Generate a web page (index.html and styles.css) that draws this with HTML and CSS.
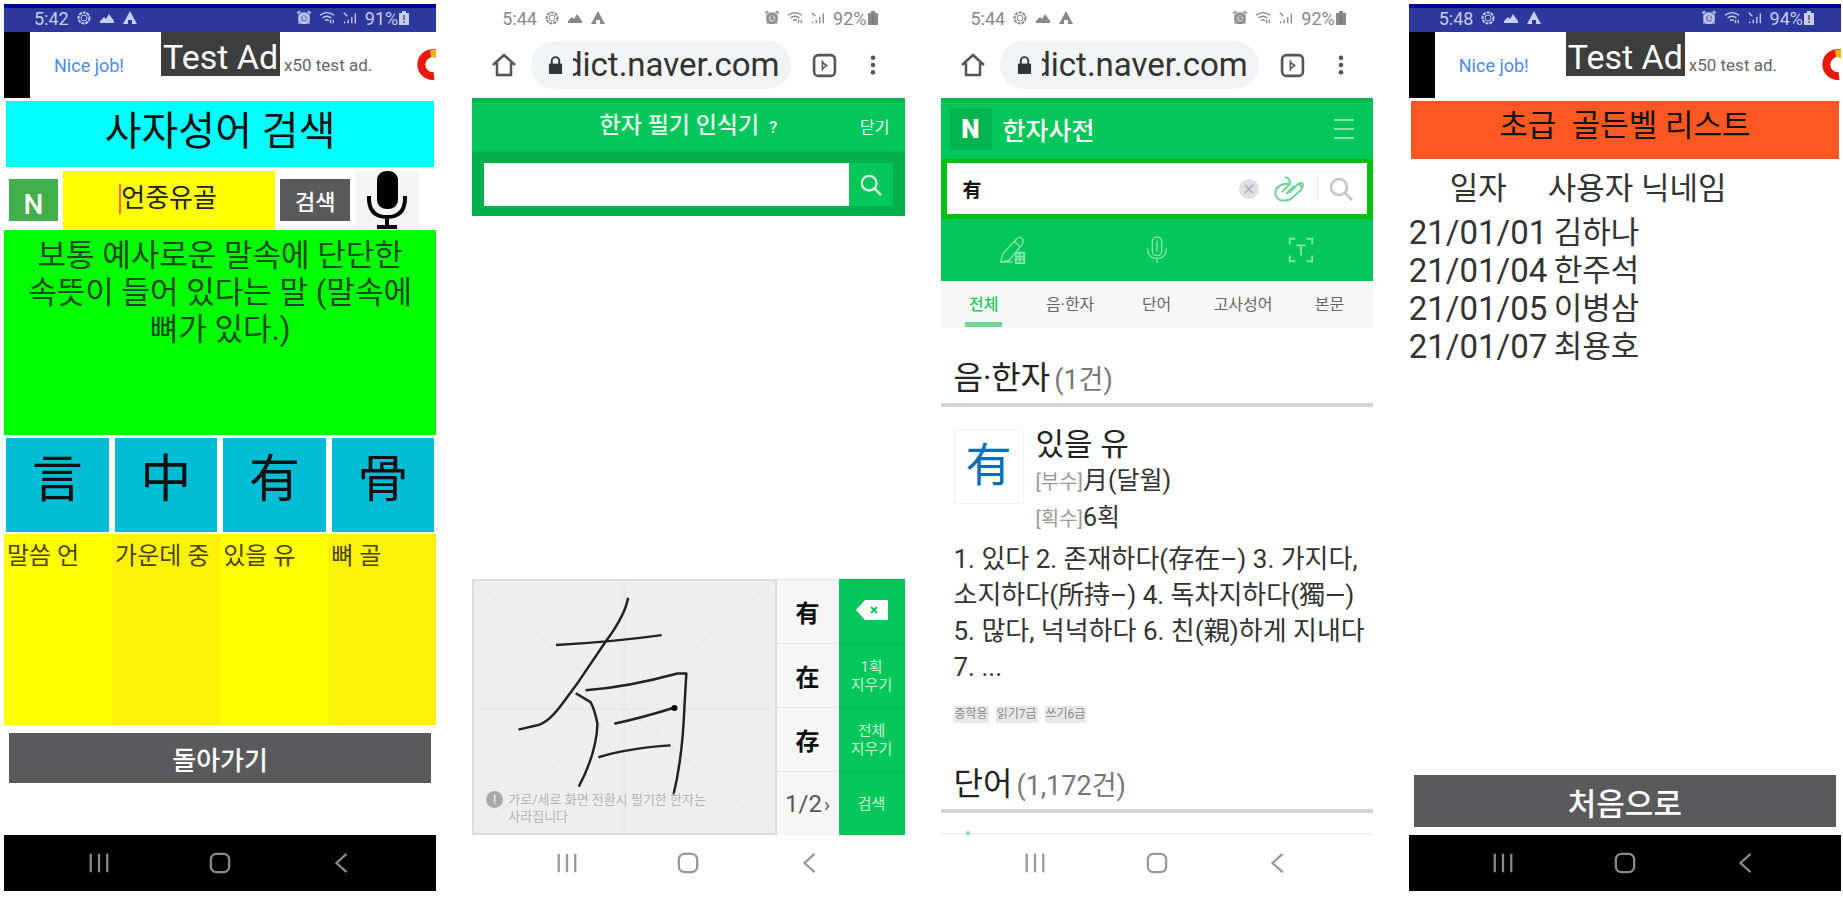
FILE: index.html
```html
<!DOCTYPE html>
<html lang="ko">
<head>
    <meta charset="UTF-8">
    <meta name="viewport" content="width=device-width, initial-scale=1.0">
    <title>사자성어 검색</title>
    <link rel="stylesheet" href="styles.css">
</head>
<body>
    <!-- shared icons -->
    <svg class="sprite" aria-hidden="true">
        <symbol id="i-gear" viewBox="0 0 16 16"><circle cx="8" cy="8" r="5.5" fill="none" stroke="currentColor" stroke-width="2" stroke-dasharray="3 1"/><circle cx="8" cy="8" r="3" fill="none" stroke="currentColor"/></symbol>
        <symbol id="i-photo" viewBox="0 0 16 16"><path d="M1 13V11L5 7l2 2 3-5 5 7v2z" fill="currentColor"/></symbol>
        <symbol id="i-warn" viewBox="0 0 16 16"><path d="M8 1l7 13H10V10H6v4H1z" fill="currentColor"/></symbol>
        <symbol id="i-alarm" viewBox="0 0 16 16"><path d="M2 2h12v12H2z" fill="currentColor" opacity=".55"/><circle cx="8" cy="8.500" r="4.500" fill="none" stroke="currentColor" stroke-width="2"/><path d="M1 3l3-2M15 3l-3-2M8 6v3h2" fill="none" stroke="currentColor" stroke-width="1.500"/></symbol>
        <symbol id="i-wifi" viewBox="0 0 18 16"><path d="M1 5q8-6 16 0M4 8q5-4 10 0M7 11q2-2 4 0M13 10v4M16 14v-4" fill="none" stroke="currentColor" stroke-width="1.500"/></symbol>
        <symbol id="i-signal" viewBox="0 0 18 16"><path d="M2 2l4 4M3 14v-2M7 14V10M11 14V7M15 14V3" fill="none" stroke="currentColor" stroke-width="1.500"/></symbol>
        <symbol id="i-battery" viewBox="0 0 12 16"><path d="M4 1h4v2h3v12H1V3h3z" fill="currentColor"/><path d="M6 5v5M5 12h2" stroke="#777" stroke-width="2"/></symbol>
        <symbol id="i-recent" viewBox="0 0 24 24"><path d="M3 2v20M12 2v20M21 2v20" stroke="currentColor" stroke-width="2.500"/></symbol>
        <symbol id="i-home" viewBox="0 0 24 24"><rect x="2" y="2" width="20" height="20" rx="6" fill="none" stroke="currentColor" stroke-width="2.500"/></symbol>
        <symbol id="i-back" viewBox="0 0 24 24"><path d="M17 2L6 12l11 10" fill="none" stroke="currentColor" stroke-width="2.500"/></symbol>
        <symbol id="i-house" viewBox="0 0 24 24"><path d="M1 12L12 2l11 10M5 10v12h14V10" fill="none" stroke="currentColor" stroke-width="2.500"/></symbol>
        <symbol id="i-lock" viewBox="0 0 16 20"><path d="M1 8h14v11H1z" fill="currentColor"/><path d="M4 9V5a4 4 0 0 1 8 0v4" fill="none" stroke="currentColor" stroke-width="2"/></symbol>
        <symbol id="i-tabs" viewBox="0 0 24 24"><rect x="2" y="2" width="20" height="20" rx="4" fill="none" stroke="currentColor" stroke-width="2.500"/><path d="M10 7v10M10 9l4 3-4 3" fill="none" stroke="currentColor" stroke-width="1.500"/></symbol>
        <symbol id="i-dots" viewBox="0 0 8 24"><circle cx="4" cy="4" r="2.500" fill="currentColor"/><circle cx="4" cy="12" r="2.500" fill="currentColor"/><circle cx="4" cy="20" r="2.500" fill="currentColor"/></symbol>
        <symbol id="i-search" viewBox="0 0 24 24"><circle cx="10" cy="10" r="8" fill="none" stroke="currentColor" stroke-width="2.500"/><path d="M16 16l7 7" stroke="currentColor" stroke-width="2.500"/></symbol>
        <symbol id="i-admob" viewBox="0 0 22 32"><path d="M22 4.500A11.500 11.500 0 1 0 20 27" fill="none" stroke="#e6190f" stroke-width="8"/><path d="M16 1.500q3-1.500 6-.5v8l-5-1z" fill="#fbb316"/></symbol>
    </svg>

    <main class="phones">
        <!-- idiom search -->
        <section class="phone">
            <header class="status status-blue">
                <span>5:42</span>
                <svg><use href="#i-gear"/></svg>
                <svg><use href="#i-photo"/></svg>
                <svg><use href="#i-warn"/></svg>
                <svg class="push"><use href="#i-alarm"/></svg>
                <svg><use href="#i-wifi"/></svg>
                <svg><use href="#i-signal"/></svg>
                <span class="charge">91%<svg><use href="#i-battery"/></svg></span>
            </header>
            <div class="ad">
                <a class="ad-link" href="#">Nice job!</a>
                <span class="ad-text">x50 test ad.</span>
                <svg class="ad-logo"><use href="#i-admob"/></svg>
                <span class="ad-badge">Test Ad</span>
            </div>
            <h1 class="title title-cyan">사자성어 검색</h1>
            <form class="idiom-form">
                <button type="button" class="btn-n">N</button>
                <div class="idiom-field">
                    <input type="text" value="언중유골" aria-label="사자성어">
                    <span class="caret"></span>
                </div>
                <button type="button" class="btn btn-search">검색</button>
                <button type="button" class="btn-mic" aria-label="음성 입력">
                    <svg viewBox="0 0 40 58"><rect x="10" y="0" width="21" height="38" rx="9"/><path d="M2 25v4q1 17 18 17t18-17v-4M20 46v9M10 56h20" fill="none" stroke="#000" stroke-width="4"/></svg>
                </button>
            </form>
            <p class="meaning">보통 예사로운 말속에 단단한 속뜻이 들어 있다는 말 (말속에 뼈가 있다.)</p>
            <div class="hanja-row">
                <button type="button">言</button>
                <button type="button">中</button>
                <button type="button">有</button>
                <button type="button">骨</button>
            </div>
            <div class="sound-row">
                <span>말씀 언</span>
                <span>가운데 중</span>
                <span>있을 유</span>
                <span>뼈 골</span>
            </div>
            <button type="button" class="btn btn-back">돌아가기</button>
            <nav class="navbar navbar-dark">
                <button type="button" aria-label="최근 앱"><svg><use href="#i-recent"/></svg></button>
                <button type="button" aria-label="홈"><svg><use href="#i-home"/></svg></button>
                <button type="button" aria-label="뒤로"><svg><use href="#i-back"/></svg></button>
            </nav>
        </section>

        <!-- handwriting input -->
        <section class="phone">
            <header class="status">
                <span>5:44</span>
                <svg><use href="#i-gear"/></svg>
                <svg><use href="#i-photo"/></svg>
                <svg><use href="#i-warn"/></svg>
                <svg class="push"><use href="#i-alarm"/></svg>
                <svg><use href="#i-wifi"/></svg>
                <svg><use href="#i-signal"/></svg>
                <span class="charge">92%<svg><use href="#i-battery"/></svg></span>
            </header>
            <div class="browser">
                <svg class="house"><use href="#i-house"/></svg>
                <div class="address">
                    <svg><use href="#i-lock"/></svg>
                    <span class="url">dict.naver.com</span>
                </div>
                <svg class="tabs-icon"><use href="#i-tabs"/></svg>
                <svg class="dots"><use href="#i-dots"/></svg>
            </div>
            <div class="write-head">
                <h2>한자 필기 인식기 <small>?</small></h2>
                <button type="button">닫기</button>
            </div>
            <form class="write-search">
                <input type="text" aria-label="검색어">
                <button type="button" aria-label="검색"><svg><use href="#i-search"/></svg></button>
            </form>
            <div class="writer">
                <div class="pad">
                    <svg class="pad-drawing" viewBox="0 0 304 256" preserveAspectRatio="none">
                        <path class="guide" d="M0 0l304 256M304 0L0 256M152 0v256M0 130h304"/>
                        <path class="ink" d="M83 65Q140 62 190 55M156 17Q153 35 133 62L106 102L90 124Q76 143 66 146L45 151M103 114L118 123Q122 130 125 145Q124 175 106 209M113 111Q155 108 206 94L215 94L213 129Q211 180 202 217M142 145Q170 139 205 128M126 179Q155 170 199 167"/>
                        <circle cx="203" cy="129" r="3"/>
                    </svg>
                    <p class="hint"><span class="hint-icon">!</span>가로/세로 화면 전환시 필기한 한자는 사라집니다</p>
                </div>
                <div class="candidates">
                    <button type="button">有</button>
                    <button type="button">在</button>
                    <button type="button">存</button>
                    <button type="button" class="pager">1/2<small>›</small></button>
                </div>
                <div class="actions">
                    <button type="button" aria-label="지우기"><svg viewBox="0 0 32 22"><path d="M0 11L9 1h23v20H9z" fill="#fff"/><path d="M15 8l6 6M21 8l-6 6" stroke="#03c75a" stroke-width="2"/></svg></button>
                    <button type="button">1획<br>지우기</button>
                    <button type="button">전체<br>지우기</button>
                    <button type="button">검색</button>
                </div>
            </div>
            <nav class="navbar">
                <button type="button" aria-label="최근 앱"><svg><use href="#i-recent"/></svg></button>
                <button type="button" aria-label="홈"><svg><use href="#i-home"/></svg></button>
                <button type="button" aria-label="뒤로"><svg><use href="#i-back"/></svg></button>
            </nav>
        </section>

        <!-- dictionary result -->
        <section class="phone">
            <header class="status">
                <span>5:44</span>
                <svg><use href="#i-gear"/></svg>
                <svg><use href="#i-photo"/></svg>
                <svg><use href="#i-warn"/></svg>
                <svg class="push"><use href="#i-alarm"/></svg>
                <svg><use href="#i-wifi"/></svg>
                <svg><use href="#i-signal"/></svg>
                <span class="charge">92%<svg><use href="#i-battery"/></svg></span>
            </header>
            <div class="browser">
                <svg class="house"><use href="#i-house"/></svg>
                <div class="address">
                    <svg><use href="#i-lock"/></svg>
                    <span class="url">dict.naver.com</span>
                </div>
                <svg class="tabs-icon"><use href="#i-tabs"/></svg>
                <svg class="dots"><use href="#i-dots"/></svg>
            </div>
            <div class="dict-head">
                <a class="dict-logo" href="#">N</a>
                <h2>한자사전</h2>
                <button type="button" aria-label="메뉴"><svg viewBox="0 0 20 22"><path d="M0 2h20M0 11h20M0 20h20" stroke="currentColor" stroke-width="2"/></svg></button>
            </div>
            <form class="dict-search">
                <input type="text" value="有" aria-label="한자 검색">
                <svg class="clear" viewBox="0 0 20 20"><circle cx="10" cy="10" r="10" fill="#dde0e5"/><path d="M6 6l8 8M14 6l-8 8" stroke="#a8adb5" stroke-width="1.500"/></svg>
                <svg class="hand" viewBox="0 0 30 26" fill="none" stroke="#6fd39a" stroke-width="2"><path d="M11 1q6 2 5 7M16 8Q5 7 2 14q-2 7 4 10 8 2 13-3l8-7q3-4 1-7l-4 1-9 9M16 8l-8 8M20 10l-8 8M25 8l3 4"/></svg>
                <span class="divider"></span>
                <button type="button" aria-label="검색"><svg><use href="#i-search"/></svg></button>
            </form>
            <div class="dict-tools">
                <button type="button" aria-label="필기"><svg viewBox="0 0 30 30" fill="none" stroke="currentColor" stroke-width="1.500"><path d="M2 28l2-9L19 3q4-3 6 0t-1 7L11 26l-9 2zM17 6l6 6M2 28h13"/><path d="M18 18h9v11h-9zM18 22h9M18 25h9M22 18v11" stroke-width="2"/></svg></button>
                <button type="button" aria-label="음성"><svg viewBox="0 0 30 30" fill="none" stroke="currentColor" stroke-width="1.500"><rect x="10" y="1" width="10" height="20" rx="5"/><path d="M5 13q0 11 10 11t10-11M15 24v5M15 5v12"/></svg></button>
                <button type="button" aria-label="문자 인식"><svg viewBox="0 0 30 30" fill="none" stroke="currentColor" stroke-width="2"><path d="M3 9V3h6M21 3h6v6M27 21v6h-6M9 27H3v-6M10 10h10M15 10v11"/></svg></button>
            </div>
            <div class="dict-tabs">
                <a class="active" href="#">전체</a>
                <a href="#">음·한자</a>
                <a href="#">단어</a>
                <a href="#">고사성어</a>
                <a href="#">본문</a>
            </div>
            <h3 class="group">음·한자<small>(1건)</small></h3>
            <article class="entry">
                <div class="entry-top">
                    <div class="entry-char">有</div>
                    <div>
                        <h4>있을 유</h4>
                        <p class="entry-info"><small>[부수]</small>月(달월)</p>
                        <p class="entry-info"><small>[획수]</small>6획</p>
                    </div>
                </div>
                <p class="entry-text">1. 있다 2. 존재하다(存在–) 3. 가지다, 소지하다(所持–) 4. 독차지하다(獨—) 5. 많다, 넉넉하다 6. 친(親)하게 지내다 7. ...</p>
                <div class="tags">
                    <span>중학용</span>
                    <span>읽기7급</span>
                    <span>쓰기6급</span>
                </div>
            </article>
            <h3 class="group">단어<small>(1,172건)</small></h3>
            <div class="peek"></div>
            <nav class="navbar">
                <button type="button" aria-label="최근 앱"><svg><use href="#i-recent"/></svg></button>
                <button type="button" aria-label="홈"><svg><use href="#i-home"/></svg></button>
                <button type="button" aria-label="뒤로"><svg><use href="#i-back"/></svg></button>
            </nav>
        </section>

        <!-- golden bell list -->
        <section class="phone">
            <header class="status status-blue">
                <span>5:48</span>
                <svg><use href="#i-gear"/></svg>
                <svg><use href="#i-photo"/></svg>
                <svg><use href="#i-warn"/></svg>
                <svg class="push"><use href="#i-alarm"/></svg>
                <svg><use href="#i-wifi"/></svg>
                <svg><use href="#i-signal"/></svg>
                <span class="charge">94%<svg><use href="#i-battery"/></svg></span>
            </header>
            <div class="ad">
                <a class="ad-link" href="#">Nice job!</a>
                <span class="ad-text">x50 test ad.</span>
                <svg class="ad-logo"><use href="#i-admob"/></svg>
                <span class="ad-badge">Test Ad</span>
            </div>
            <h1 class="title title-orange">초급&nbsp; 골든벨 리스트</h1>
            <table class="bell">
                <thead>
                    <tr><th class="date">일자</th><th>사용자 닉네임</th></tr>
                </thead>
                <tbody>
                    <tr><td>21/01/01</td><td>김하나</td></tr>
                    <tr><td>21/01/04</td><td>한주석</td></tr>
                    <tr><td>21/01/05</td><td>이병삼</td></tr>
                    <tr><td>21/01/07</td><td>최용호</td></tr>
                </tbody>
            </table>
            <button type="button" class="btn btn-first">처음으로</button>
            <nav class="navbar navbar-dark">
                <button type="button" aria-label="최근 앱"><svg><use href="#i-recent"/></svg></button>
                <button type="button" aria-label="홈"><svg><use href="#i-home"/></svg></button>
                <button type="button" aria-label="뒤로"><svg><use href="#i-back"/></svg></button>
            </nav>
        </section>
    </main>
</body>
</html>
```
FILE: styles.css
```css
* {
    box-sizing: border-box;
}

body {
    margin: 0;
    background: #fff;
    color: #222;
    font-family: Roboto, "Noto Sans CJK KR", sans-serif;
}

h1, h2, h3, h4, p {
    margin: 0;
    font-weight: 400;
}

button, input {
    font-family: inherit;
    padding: 0;
    border: 0;
    border-radius: 0;
    background: none;
    color: inherit;
}

button {
    cursor: pointer;
}

a {
    color: inherit;
    text-decoration: none;
}

.sprite {
    display: none;
}

.phones {
    display: grid;
    grid-template-columns: repeat(4, 1fr);
    gap: 36px;
    padding: 4px 2px 10px 4px;
}

.phone {
    display: flex;
    flex-direction: column;
    min-width: 0;
    min-height: calc(100vh - 14px);
}

/* status bar */
.status {
    display: flex;
    align-items: center;
    gap: 7px;
    height: 28px;
    padding: 0 26px 0 30px;
    color: #888;
    font-size: 18px;
}

.status svg {
    width: 16px;
    height: 16px;
}

.status .push {
    margin-left: auto;
}

.status-blue {
    background: linear-gradient(#0202a0 4px, #2c389c 4px);
    color: #c9cdf0;
}

.charge {
    display: flex;
    align-items: center;
}

.charge svg {
    width: 12px;
}

/* ad banner */
.ad {
    position: relative;
    display: flex;
    align-items: center;
    height: 66px;
    border-left: 26px solid #000;
}

.ad-link {
    margin-left: 24px;
    color: #4a8af4;
    font-size: 18px;
}

.ad-text {
    margin-left: auto;
    color: #666;
    font-size: 17px;
}

.ad-logo {
    width: 22px;
    height: 32px;
    margin-left: 42px;
}

.ad-badge {
    position: absolute;
    top: 0;
    left: 131px;
    height: 44px;
    padding: 0 2px;
    background: #3d3d3d;
    color: #fff;
    font-size: 34px;
    line-height: 50px;
}

.title {
    margin: 3px 2px 0;
    color: #111;
    text-align: center;
}

.title-cyan {
    height: 66px;
    background: #00ffff;
    font-size: 40px;
    line-height: 62px;
}

.title-orange {
    height: 58px;
    background: #ff5722;
    font-size: 31px;
    line-height: 50px;
}

.btn {
    background: #5a5a5c;
    color: #fff;
    font-weight: 500;
}

/* idiom search */
.idiom-form {
    display: flex;
    align-items: center;
    gap: 5px;
    height: 58px;
    margin: 4px 17px 1px 5px;
}

.btn-n {
    width: 49px;
    height: 42px;
    padding-top: 8px;
    background: #43ae4c;
    color: #fff;
    font-size: 28px;
    font-weight: 500;
}

.idiom-field {
    position: relative;
    flex: 1;
    height: 58px;
}

.idiom-field input {
    width: 100%;
    height: 100%;
    padding-bottom: 9px;
    background: #ffff00;
    font-size: 26px;
    text-align: center;
}

.caret {
    position: absolute;
    top: 13px;
    left: calc(50% - 50px);
    width: 2px;
    height: 30px;
    background: #ff6a4d;
}

.btn-search {
    width: 70px;
    height: 42px;
    font-size: 22px;
}

.btn-mic {
    width: 64px;
    height: 58px;
    background: #f5f5f5;
}

.btn-mic svg {
    display: block;
    width: 40px;
    height: 58px;
    margin: 0 auto;
}

.meaning {
    min-height: 205px;
    padding-top: 7px;
    background: #00ff00;
    color: #1a4a1a;
    font-size: 31px;
    line-height: 37px;
    text-align: center;
    word-break: keep-all;
}

.hanja-row {
    display: grid;
    grid-template-columns: repeat(4, 1fr);
    gap: 6px;
    margin: 3px 2px 2px;
}

.hanja-row button {
    height: 94px;
    padding-bottom: 10px;
    background: #00bcd4;
    color: #111;
    font-size: 51px;
    line-height: 80px;
}

.sound-row {
    display: grid;
    grid-template-columns: repeat(4, 1fr);
    min-height: 191px;
    background: #ffff00;
}

.sound-row span {
    padding: 6px 3px;
    color: #4a4410;
    font-size: 24px;
    line-height: 32px;
    white-space: nowrap;
}

.sound-row span:nth-child(even) {
    background: #fdf207;
}

.btn-back {
    height: 50px;
    margin: 8px 5px;
    font-size: 26px;
}

/* android navigation */
.navbar {
    display: grid;
    grid-template-columns: repeat(3, 1fr);
    height: 56px;
    margin-top: auto;
    padding: 0 34px;
    color: #999;
}

.navbar svg {
    display: block;
    width: 24px;
    height: 22px;
    margin: 0 auto;
}

.navbar-dark {
    background: #000;
    color: #8a8a8a;
}

/* browser toolbar */
.browser {
    display: flex;
    align-items: center;
    height: 66px;
    padding: 0 28px 0 20px;
    color: #555;
}

.house {
    width: 24px;
    height: 24px;
}

.address {
    display: flex;
    flex: 1;
    align-items: center;
    gap: 10px;
    min-width: 0;
    height: 48px;
    margin: 0 21px 0 15px;
    padding: 0 11px 0 17px;
    border-radius: 24px;
    background: #f1f3f4;
    color: #333;
}

.address svg {
    flex: none;
    width: 15px;
    height: 19px;
}

.url {
    display: flex;
    flex: 1;
    justify-content: flex-end;
    min-width: 0;
    overflow: hidden;
    font-size: 33px;
    line-height: 40px;
}

.tabs-icon {
    width: 25px;
    height: 25px;
}

.dots {
    width: 8px;
    height: 22px;
    margin-left: 32px;
}

/* handwriting input */
.write-head {
    position: relative;
    height: 53px;
    border-top: 4px solid #02b84e;
    background: #03c75a;
    color: #e6f9ee;
    text-align: center;
}

.write-head h2 {
    font-size: 23px;
    font-weight: 500;
    line-height: 48px;
}

.write-head small {
    margin-left: 4px;
    font-size: 17px;
}

.write-head button {
    position: absolute;
    top: 0;
    right: 15px;
    height: 48px;
    font-size: 16px;
}

.write-search {
    display: flex;
    height: 65px;
    padding: 12px 12px 10px;
    background: #02b14b;
}

.write-search input {
    flex: 1;
    min-width: 0;
    background: #fff;
}

.write-search button {
    width: 44px;
    background: #03c75a;
    color: #d8f6e4;
}

.write-search svg {
    width: 22px;
    height: 22px;
    vertical-align: middle;
}

.writer {
    display: grid;
    grid-template-columns: 1fr 62px 66px;
    margin-top: auto;
}

.writer + .navbar {
    margin-top: 0;
}

.pad {
    position: relative;
    height: 256px;
    border: 2px solid #dcdcdc;
    background: #eee;
}

.pad-drawing {
    display: block;
    width: 100%;
    height: 100%;
}

.guide {
    fill: none;
    stroke: #e4e4e4;
}

.ink {
    fill: none;
    stroke: #222;
    stroke-width: 2.5;
    stroke-linejoin: round;
}

.hint {
    position: absolute;
    bottom: 8px;
    left: 34px;
    width: 208px;
    color: #b4b4b4;
    font-size: 13px;
    line-height: 17px;
    word-break: keep-all;
}

.hint-icon {
    position: absolute;
    top: 0;
    left: -22px;
    width: 17px;
    border-radius: 50%;
    background: #aaa;
    color: #fff;
    text-align: center;
}

.candidates, .actions {
    display: grid;
    grid-template-rows: repeat(4, 1fr);
}

.candidates button {
    border-top: 1px solid #e2e2e2;
    background: #f6f6f6;
    color: #111;
    font-size: 24px;
    font-weight: 700;
}

.candidates .pager {
    color: #555;
    font-weight: 400;
    white-space: nowrap;
}

.pager small {
    margin-left: 2px;
    font-size: 20px;
}

.actions button {
    border-top: 1px solid #02bd55;
    background: #03c75a;
    color: #c5f2d8;
    font-size: 15px;
    line-height: 18px;
}

.actions svg {
    width: 32px;
    height: 22px;
}

/* dictionary */
.dict-head {
    display: flex;
    align-items: center;
    height: 61px;
    padding: 0 19px 4px 9px;
    border-top: 4px solid #02b84e;
    background: #03c75a;
    color: #fff;
}

.dict-logo {
    width: 42px;
    height: 42px;
    background: #02b350;
    font-size: 26px;
    font-weight: 900;
    line-height: 42px;
    text-align: center;
}

.dict-head h2 {
    margin-left: 11px;
    font-size: 25px;
    font-weight: 500;
}

.dict-head button {
    margin-left: auto;
    color: #7fe3aa;
}

.dict-head svg {
    display: block;
    width: 20px;
    height: 22px;
}

.dict-search {
    display: flex;
    align-items: center;
    height: 60px;
    padding: 0 14px 0 16px;
    border: 4px solid #00c013;
    border-width: 4px 6px 5px;
    background: #fff;
}

.dict-search input {
    flex: 1;
    min-width: 0;
    color: #111;
    font-size: 19px;
    font-weight: 700;
}

.clear {
    width: 20px;
    height: 20px;
}

.hand {
    width: 30px;
    height: 26px;
    margin: 0 13px 0 15px;
}

.divider {
    width: 1px;
    height: 26px;
    background: #e5e5e5;
}

.dict-search button {
    margin-left: 11px;
    color: #c4c4c4;
}

.dict-search button svg {
    display: block;
    width: 24px;
    height: 24px;
}

.dict-tools {
    display: grid;
    grid-template-columns: repeat(3, 1fr);
    height: 62px;
    background: #03c75a;
    color: #86e4ae;
}

.dict-tools svg {
    display: block;
    width: 28px;
    height: 28px;
    margin: 0 auto;
}

.dict-tabs {
    display: grid;
    grid-template-columns: repeat(5, 1fr);
    justify-items: center;
    height: 47px;
    background: #f7f7f7;
    color: #666;
    font-size: 16px;
    line-height: 48px;
}

.dict-tabs .active {
    height: 46px;
    padding: 0 4px;
    border-bottom: 5px solid #6fd695;
    color: #2cc468;
    font-weight: 500;
}

.group {
    height: 79px;
    padding: 26px 13px 0;
    border-bottom: 4px solid #d5d5d5;
    color: #222;
    font-size: 32px;
    line-height: 48px;
}

.group small {
    margin-left: 4px;
    color: #777;
    font-size: 27px;
}

.entry {
    padding: 20px 4px 11px 13px;
}

.entry-top {
    display: flex;
    gap: 12px;
}

.entry-char {
    width: 70px;
    height: 74px;
    margin-top: 3px;
    border: 1px solid #f3f3f3;
    color: #0b6fb8;
    font-size: 46px;
    line-height: 68px;
    text-align: center;
}

.entry h4 {
    font-size: 31px;
    line-height: 36px;
}

.entry-info {
    color: #333;
    font-size: 25px;
    line-height: 35px;
}

.entry-info small {
    color: #999;
    font-size: 20px;
}

.entry-text {
    margin-top: 4px;
    color: #333;
    font-size: 26px;
    line-height: 36px;
    word-break: keep-all;
}

.tags {
    display: flex;
    gap: 7px;
    margin-top: 21px;
}

.tags span {
    padding: 0 1px;
    background: #e8e8e8;
    color: #888;
    font-size: 12px;
    line-height: 17px;
}

.peek {
    height: 22px;
    border-bottom: 2px solid #f3f3f3;
}

.peek::after {
    content: "";
    display: block;
    width: 4px;
    height: 4px;
    margin: 18px 25px 0;
    border-radius: 50%;
    background: #8ccfc4;
}

/* golden bell list */
.bell {
    border-collapse: collapse;
    table-layout: fixed;
    width: 100%;
    margin-top: 1px;
    color: #333;
    font-size: 31px;
    line-height: 38px;
}

.bell th {
    height: 54px;
    padding: 3px 0 0;
    font-weight: 400;
    text-align: left;
}

.bell .date {
    width: 139px;
    text-align: center;
}

.bell td {
    height: 38px;
    padding: 0;
    font-size: 33px;
}

.bell td + td {
    padding-left: 6px;
    font-size: 31px;
}

.btn-first {
    height: 52px;
    margin: auto 5px 8px;
    font-size: 31px;
}

.btn-first + .navbar {
    margin-top: 0;
}
```
